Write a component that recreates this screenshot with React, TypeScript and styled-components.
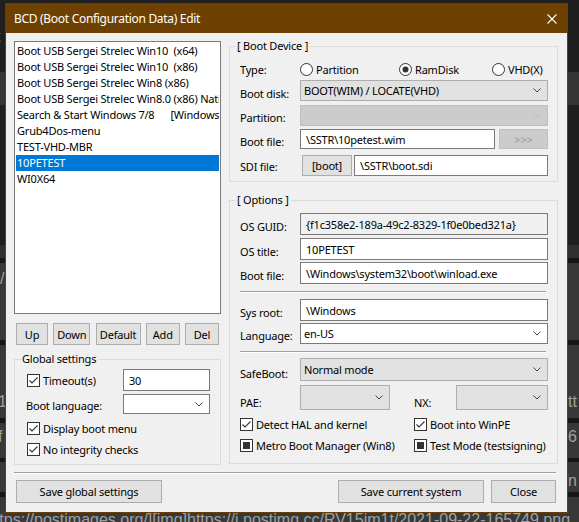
import React from 'react';
import styled, { createGlobalStyle } from 'styled-components';

const GlobalStyle = createGlobalStyle`
  html, body {
    margin: 0;
    padding: 0;
    background: #1f1f1f;
  }
  body {
    font-family: 'Noto Sans', 'Liberation Sans', sans-serif;
  }
`;

const Desktop = styled.div`
  position: relative;
  width: 579px;
  height: 522px;
  overflow: hidden;
  background: #1f1f1f;
`;

const Backdrop = styled.div`
  display: flex;
  flex-direction: column;
`;

const Band = styled.div<{ $h: number; $bg: string; $pad: number }>`
  flex: none;
  height: ${(p) => p.$h}px;
  box-sizing: border-box;
  padding-top: ${(p) => p.$pad}px;
  background: ${(p) => p.$bg};
  display: flex;
  justify-content: space-between;
  align-items: flex-start;
  overflow: hidden;
  white-space: nowrap;
  color: #a0a0a0;
  font: 16px/20px 'Liberation Sans', Arial, sans-serif;
`;

const BandLeft = styled.span<{ $shift: number }>`
  margin-left: ${(p) => p.$shift}px;
`;

const BandRight = styled.span`
  margin-right: 2px;
`;

const Window = styled.div`
  position: absolute;
  left: 5px;
  top: 3px;
  width: 563px;
  height: 510px;
  box-sizing: border-box;
  border: 1px solid #6a3d00;
  background: #f0f0f0;
  display: flex;
  flex-direction: column;
  font-family: 'Noto Sans', 'Liberation Sans', sans-serif;
  font-size: 11px;
  letter-spacing: -0.2px;
  color: #000;
`;

const TitleBar = styled.div`
  flex: none;
  height: 29px;
  background: #6f4100;
  color: #fff;
  display: flex;
  align-items: center;
  justify-content: space-between;
  padding: 0 10px 0 8px;
  font-size: 12px;
  letter-spacing: -0.3px;
`;

const Client = styled.div`
  flex: 1;
  display: flex;
  flex-direction: column;
  padding: 0 9px 0 8px;
`;

const Main = styled.div`
  display: flex;
  gap: 8px;
  height: 432px;
`;

const LeftColumn = styled.div`
  width: 207px;
  margin-top: 8px;
  display: flex;
  flex-direction: column;
`;

const RightColumn = styled.div`
  width: 329px;
  margin-top: 13px;
  display: flex;
  flex-direction: column;
`;

const ListBox = styled.div`
  height: 273px;
  box-sizing: border-box;
  border: 1px solid #7a7a7a;
  padding: 1px;
  background: #fff;
  overflow: hidden;
`;

const ListItem = styled.div<{ $selected?: boolean }>`
  height: 16px;
  line-height: 16px;
  padding-left: 1px;
  white-space: pre;
  overflow: hidden;
  background: ${(p) => (p.$selected ? '#0078d7' : 'transparent')};
  color: ${(p) => (p.$selected ? '#fff' : '#000')};
`;

const ButtonRow = styled.div`
  display: flex;
  justify-content: space-between;
  margin: 9px 2px 0;
  height: 22px;
`;

const PushButton = styled.div<{ $w: number; $off?: boolean }>`
  width: ${(p) => p.$w}px;
  height: 100%;
  box-sizing: border-box;
  border: 1px solid ${(p) => (p.$off ? '#bfbfbf' : '#adadad')};
  background: ${(p) => (p.$off ? '#cccccc' : '#e1e1e1')};
  color: ${(p) => (p.$off ? '#9a9a9a' : '#000')};
  display: flex;
  align-items: center;
  justify-content: center;
  flex: none;
`;

const Group = styled.div<{ $h: number; $mt: number; $pl: number; $pr: number }>`
  position: relative;
  height: ${(p) => p.$h}px;
  margin-top: ${(p) => p.$mt}px;
  box-sizing: border-box;
  border: 1px solid #dcdcdc;
  padding: 0 ${(p) => p.$pr}px 0 ${(p) => p.$pl}px;
  display: flex;
  flex-direction: column;
`;

const Caption = styled.div`
  position: absolute;
  top: -9px;
  left: 6px;
  padding: 0 2px 0 1px;
  line-height: 16px;
  background: #f0f0f0;
`;

const FieldRow = styled.div<{ $h: number; $mt: number; $cols: string }>`
  height: ${(p) => p.$h}px;
  margin-top: ${(p) => p.$mt}px;
  flex: none;
  display: grid;
  grid-template-columns: ${(p) => p.$cols};
  align-items: center;
`;

const FieldLabel = styled.div<{ $drop?: number; $nudge?: number }>`
  padding-top: ${(p) => p.$drop ?? 4}px;
  margin-left: ${(p) => p.$nudge ?? 0}px;
  white-space: nowrap;
`;

const TextBox = styled.div<{ $readOnly?: boolean }>`
  flex: 1;
  align-self: stretch;
  box-sizing: border-box;
  border: 1px solid #7a7a7a;
  background: ${(p) => (p.$readOnly ? '#f0f0f0' : '#fff')};
  padding-left: 5px;
  display: flex;
  align-items: center;
  white-space: nowrap;
  overflow: hidden;
`;

type ComboKind = 'list' | 'edit' | 'off';

const comboTone: Record<ComboKind, { bg: string; border: string; arrow: string }> = {
  list: { bg: '#e1e1e1', border: '#adadad', arrow: '#444' },
  edit: { bg: '#fff', border: '#7a7a7a', arrow: '#444' },
  off: { bg: '#cccccc', border: '#bfbfbf', arrow: '#bdbdbd' },
};

const ComboFrame = styled.div<{ $kind: ComboKind }>`
  align-self: stretch;
  box-sizing: border-box;
  border: 1px solid ${(p) => comboTone[p.$kind].border};
  background: ${(p) => comboTone[p.$kind].bg};
  padding: 0 6px 0 3px;
  display: flex;
  align-items: center;
  justify-content: space-between;
  white-space: nowrap;
`;

const Pair = styled.div<{ $gap: number }>`
  align-self: stretch;
  display: flex;
  gap: ${(p) => p.$gap}px;
`;

const Option = styled.div`
  display: flex;
  align-items: center;
  gap: 3px;
  white-space: nowrap;
`;

const Mark = styled.svg`
  flex: none;
  display: block;
`;

const Etched = styled.div<{ $mt: number; $mr: number }>`
  flex: none;
  height: 0;
  margin: ${(p) => p.$mt}px ${(p) => p.$mr}px 0 0;
  border-top: 1px solid #a0a0a0;
  border-bottom: 1px solid #fff;
`;

const Footer = styled.div`
  display: flex;
  height: 23px;
  margin: 6px 2px 0;
  gap: 7px;
`;

const Spacer = styled.div`
  flex: 1;
`;

const Chevron = ({ color }: { color: string }) => (
  <svg width="8" height="5" viewBox="0 0 8 5">
    <polyline points="0.5,0.5 4,4 7.5,0.5" fill="none" stroke={color} strokeWidth="1" />
  </svg>
);

const Combo = ({ kind, value }: { kind: ComboKind; value?: string }) => (
  <ComboFrame $kind={kind}>
    {value ? <span>{value}</span> : <i />}
    <Chevron color={comboTone[kind].arrow} />
  </ComboFrame>
);

const Check = ({ state, label }: { state: 'on' | 'mixed'; label: string }) => (
  <Option>
    <Mark width="13" height="13" viewBox="0 0 13 13">
      <rect x="0.5" y="0.5" width="12" height="12" fill="#fff" stroke="#333" />
      {state === 'on' ? (
        <polyline points="2.5,6.5 5,9 10.5,3.5" fill="none" stroke="#333" strokeWidth="1.1" />
      ) : (
        <rect x="3" y="3" width="7" height="7" fill="#333" />
      )}
    </Mark>
    <span>{label}</span>
  </Option>
);

const Radio = ({ on, label }: { on?: boolean; label: string }) => (
  <Option>
    <Mark width="13" height="13" viewBox="0 0 13 13">
      <circle cx="6.5" cy="6.5" r="6" fill="#fff" stroke="#333" />
      {on && <circle cx="6.5" cy="6.5" r="3" fill="#333" />}
    </Mark>
    <span>{label}</span>
  </Option>
);

const bands = [
  { h: 26, bg: '#1f1f1f' },
  { h: 22, bg: '#1f1f1f', pad: 1, left: 't', shift: -4 },
  { h: 24, bg: '#1f1f1f' },
  { h: 33, bg: '#353535' },
  { h: 140, bg: '#1f1f1f' },
  { h: 13, bg: '#2f2f2f' },
  { h: 5, bg: '#161616' },
  { h: 77, bg: '#383838', pad: 6, left: '/', shift: 0 },
  { h: 5, bg: '#161616' },
  { h: 73, bg: '#383838', pad: 47, left: '1', shift: -2, right: 'htt' },
  { h: 5, bg: '#161616' },
  { h: 35, bg: '#383838', pad: 4, left: 'f', shift: -2, right: '216' },
  { h: 4, bg: '#161616' },
  { h: 30, bg: '#383838', pad: 9, right: 'g/n' },
  { h: 5, bg: '#161616' },
  {
    h: 25,
    bg: '#383838',
    pad: 13,
    left: 'https://postimages.org/][img]https://i.postimg.cc/RV15im1t/2021-09-22-165749.png',
    shift: -14,
  },
];

const entries = [
  'Boot USB Sergei Strelec Win10  (x64)',
  'Boot USB Sergei Strelec Win10  (x86)',
  'Boot USB Sergei Strelec Win8 (x86)',
  'Boot USB Sergei Strelec Win8.0 (x86) Native',
  'Search & Start Windows 7/8      [Windows\\BOOT]',
  'Grub4Dos-menu',
  'TEST-VHD-MBR',
  '10PETEST',
  'WI0X64',
];

const App = () => {
  return (
    <Desktop>
      <GlobalStyle />
      <Backdrop>
        {bands.map((b, i) => (
          <Band key={i} $h={b.h} $bg={b.bg} $pad={b.pad ?? 0}>
            <BandLeft $shift={b.shift ?? 0}>{b.left}</BandLeft>
            <BandRight>{b.right}</BandRight>
          </Band>
        ))}
      </Backdrop>

      <Window>
        <TitleBar>
          <span>BCD (Boot Configuration Data) Edit</span>
          <svg width="10" height="10" viewBox="0 0 10 10">
            <path d="M0.5 0.5 L9.5 9.5 M9.5 0.5 L0.5 9.5" stroke="#fff" strokeWidth="1.1" />
          </svg>
        </TitleBar>

        <Client>
          <Main>
            <LeftColumn>
              <ListBox>
                {entries.map((e) => (
                  <ListItem key={e} $selected={e === '10PETEST'}>
                    {e}
                  </ListItem>
                ))}
              </ListBox>
              <ButtonRow>
                <PushButton $w={32}>Up</PushButton>
                <PushButton $w={37}>Down</PushButton>
                <PushButton $w={45}>Default</PushButton>
                <PushButton $w={34}>Add</PushButton>
                <PushButton $w={34}>Del</PushButton>
              </ButtonRow>

              <Group $h={106} $mt={14} $pl={12} $pr={10}>
                <Caption>Global settings</Caption>
                <FieldRow $h={22} $mt={9} $cols="96px 1fr">
                  <Check state="on" label="Timeout(s)" />
                  <TextBox>30</TextBox>
                </FieldRow>
                <FieldRow $h={20} $mt={3} $cols="96px 1fr">
                  <FieldLabel $drop={3} $nudge={-1}>
                    Boot language:
                  </FieldLabel>
                  <Combo kind="edit" />
                </FieldRow>
                <FieldRow $h={20} $mt={4} $cols="1fr">
                  <Check state="on" label="Display boot menu" />
                </FieldRow>
                <FieldRow $h={20} $mt={1} $cols="1fr">
                  <Check state="on" label="No integrity checks" />
                </FieldRow>
              </Group>
            </LeftColumn>

            <RightColumn>
              <Group $h={136} $mt={0} $pl={10} $pr={9}>
                <Caption>[ Boot Device ]</Caption>
                <FieldRow $h={16} $mt={14} $cols="60px 99px 93px 1fr">
                  <FieldLabel $drop={1}>Type:</FieldLabel>
                  <Radio label="Partition" />
                  <Radio on label="RamDisk" />
                  <Radio label="VHD(X)" />
                </FieldRow>
                <FieldRow $h={21} $mt={3} $cols="60px 1fr">
                  <FieldLabel $drop={5}>Boot disk:</FieldLabel>
                  <Combo kind="list" value="BOOT(WIM) / LOCATE(VHD)" />
                </FieldRow>
                <FieldRow $h={21} $mt={4} $cols="60px 1fr">
                  <FieldLabel>Partition:</FieldLabel>
                  <Combo kind="off" />
                </FieldRow>
                <FieldRow $h={20} $mt={3} $cols="60px 1fr">
                  <FieldLabel>Boot file:</FieldLabel>
                  <Pair $gap={4}>
                    <TextBox>\SSTR\10petest.wim</TextBox>
                    <PushButton $w={49} $off>
                      &gt;&gt;&gt;
                    </PushButton>
                  </Pair>
                </FieldRow>
                <FieldRow $h={21} $mt={6} $cols="62px 1fr">
                  <FieldLabel $drop={1} $nudge={0}>
                    SDI file:
                  </FieldLabel>
                  <Pair $gap={2}>
                    <PushButton $w={50}>[boot]</PushButton>
                    <TextBox>\SSTR\boot.sdi</TextBox>
                  </Pair>
                </FieldRow>
              </Group>

              <Group $h={264} $mt={18} $pl={10} $pr={9}>
                <Caption>[ Options ]</Caption>
                <FieldRow $h={22} $mt={12} $cols="60px 1fr">
                  <FieldLabel>OS GUID:</FieldLabel>
                  <TextBox $readOnly>{'{f1c358e2-189a-49c2-8329-1f0e0bed321a}'}</TextBox>
                </FieldRow>
                <FieldRow $h={22} $mt={3} $cols="60px 1fr">
                  <FieldLabel>OS title:</FieldLabel>
                  <TextBox>10PETEST</TextBox>
                </FieldRow>
                <FieldRow $h={22} $mt={2} $cols="60px 1fr">
                  <FieldLabel>Boot file:</FieldLabel>
                  <TextBox>\Windows\system32\boot\winload.exe</TextBox>
                </FieldRow>
                <Etched $mt={7} $mr={2} />
                <FieldRow $h={22} $mt={6} $cols="60px 1fr">
                  <FieldLabel>Sys root:</FieldLabel>
                  <TextBox>\Windows</TextBox>
                </FieldRow>
                <FieldRow $h={21} $mt={2} $cols="60px 1fr">
                  <FieldLabel>Language:</FieldLabel>
                  <Combo kind="edit" value="en-US" />
                </FieldRow>
                <Etched $mt={7} $mr={2} />
                <FieldRow $h={21} $mt={5} $cols="60px 1fr">
                  <FieldLabel $drop={8}>SafeBoot:</FieldLabel>
                  <Combo kind="list" value="Normal mode" />
                </FieldRow>
                <FieldRow $h={21} $mt={6} $cols="60px 90px 24px 42px 1fr">
                  <FieldLabel $drop={10}>PAE:</FieldLabel>
                  <Combo kind="list" />
                  <i />
                  <FieldLabel $drop={10}>NX:</FieldLabel>
                  <Combo kind="list" />
                </FieldRow>
                <FieldRow $h={20} $mt={8} $cols="174px 1fr">
                  <Check state="on" label="Detect HAL and kernel" />
                  <Check state="on" label="Boot into WinPE" />
                </FieldRow>
                <FieldRow $h={20} $mt={1} $cols="174px 1fr">
                  <Check state="mixed" label="Metro Boot Manager (Win8)" />
                  <Check state="mixed" label="Test Mode (testsigning)" />
                </FieldRow>
              </Group>
            </RightColumn>
          </Main>

          <Etched $mt={7} $mr={2} />

          <Footer>
            <PushButton $w={146}>Save global settings</PushButton>
            <Spacer />
            <PushButton $w={146}>Save current system</PushButton>
            <PushButton $w={65}>Close</PushButton>
          </Footer>
        </Client>
      </Window>
    </Desktop>
  );
};

export default App;
